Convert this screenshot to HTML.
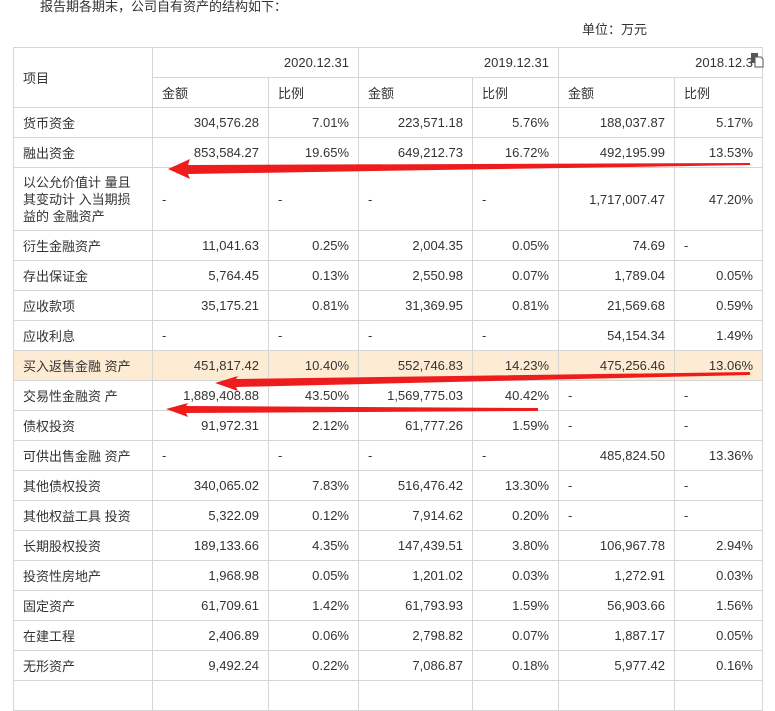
<!DOCTYPE html>
<html><head><meta charset="utf-8"><style>
body{margin:0;width:775px;height:686px;overflow:hidden;background:#fff;font-family:"Liberation Sans","Noto Sans CJK SC",sans-serif;font-size:13px;color:#333;position:relative}
table{position:absolute;left:13px;top:47px;border-collapse:collapse;table-layout:fixed}
td{border:1px solid #d5d5d5;padding:0 9px;height:29px;white-space:nowrap;overflow:hidden}
td.r{text-align:right}
tr.hl td{background:#fdebd3}
.t{position:absolute;font-size:13px;color:#333}
</style></head><body>
<div class="t" style="left:40px;top:-4px">报告期各期末，公司自有资产的结构如下：</div>
<div class="t" style="left:582px;top:19px">单位：万元</div>
<table>
<colgroup><col style="width:139px"><col style="width:116px"><col style="width:90px"><col style="width:114px"><col style="width:86px"><col style="width:116px"><col style="width:88px"></colgroup>
<tr><td rowspan="2" style="vertical-align:middle">项目</td><td class="r" colspan="2">2020.12.31</td><td class="r" colspan="2">2019.12.31</td><td class="r" colspan="2" style="padding-right:9px">2018.12.3</td></tr>
<tr><td>金额</td><td>比例</td><td>金额</td><td>比例</td><td>金额</td><td>比例</td></tr>
<tr><td>货币资金</td><td class="r">304,576.28</td><td class="r">7.01%</td><td class="r">223,571.18</td><td class="r">5.76%</td><td class="r">188,037.87</td><td class="r">5.17%</td></tr>
<tr><td>融出资金</td><td class="r">853,584.27</td><td class="r">19.65%</td><td class="r">649,212.73</td><td class="r">16.72%</td><td class="r">492,195.99</td><td class="r">13.53%</td></tr>
<tr style="height:62px"><td style="height:62px;line-height:17px;white-space:normal;padding-top:0;padding-bottom:0">以公允价值计 量且其变动计 入当期损益的 金融资产</td><td>-</td><td>-</td><td>-</td><td>-</td><td class="r">1,717,007.47</td><td class="r">47.20%</td></tr>
<tr><td>衍生金融资产</td><td class="r">11,041.63</td><td class="r">0.25%</td><td class="r">2,004.35</td><td class="r">0.05%</td><td class="r">74.69</td><td>-</td></tr>
<tr><td>存出保证金</td><td class="r">5,764.45</td><td class="r">0.13%</td><td class="r">2,550.98</td><td class="r">0.07%</td><td class="r">1,789.04</td><td class="r">0.05%</td></tr>
<tr><td>应收款项</td><td class="r">35,175.21</td><td class="r">0.81%</td><td class="r">31,369.95</td><td class="r">0.81%</td><td class="r">21,569.68</td><td class="r">0.59%</td></tr>
<tr><td>应收利息</td><td>-</td><td>-</td><td>-</td><td>-</td><td class="r">54,154.34</td><td class="r">1.49%</td></tr>
<tr class="hl"><td>买入返售金融 资产</td><td class="r">451,817.42</td><td class="r">10.40%</td><td class="r">552,746.83</td><td class="r">14.23%</td><td class="r">475,256.46</td><td class="r">13.06%</td></tr>
<tr><td>交易性金融资 产</td><td class="r">1,889,408.88</td><td class="r">43.50%</td><td class="r">1,569,775.03</td><td class="r">40.42%</td><td>-</td><td>-</td></tr>
<tr><td>债权投资</td><td class="r">91,972.31</td><td class="r">2.12%</td><td class="r">61,777.26</td><td class="r">1.59%</td><td>-</td><td>-</td></tr>
<tr><td>可供出售金融 资产</td><td>-</td><td>-</td><td>-</td><td>-</td><td class="r">485,824.50</td><td class="r">13.36%</td></tr>
<tr><td>其他债权投资</td><td class="r">340,065.02</td><td class="r">7.83%</td><td class="r">516,476.42</td><td class="r">13.30%</td><td>-</td><td>-</td></tr>
<tr><td>其他权益工具 投资</td><td class="r">5,322.09</td><td class="r">0.12%</td><td class="r">7,914.62</td><td class="r">0.20%</td><td>-</td><td>-</td></tr>
<tr><td>长期股权投资</td><td class="r">189,133.66</td><td class="r">4.35%</td><td class="r">147,439.51</td><td class="r">3.80%</td><td class="r">106,967.78</td><td class="r">2.94%</td></tr>
<tr><td>投资性房地产</td><td class="r">1,968.98</td><td class="r">0.05%</td><td class="r">1,201.02</td><td class="r">0.03%</td><td class="r">1,272.91</td><td class="r">0.03%</td></tr>
<tr><td>固定资产</td><td class="r">61,709.61</td><td class="r">1.42%</td><td class="r">61,793.93</td><td class="r">1.59%</td><td class="r">56,903.66</td><td class="r">1.56%</td></tr>
<tr><td>在建工程</td><td class="r">2,406.89</td><td class="r">0.06%</td><td class="r">2,798.82</td><td class="r">0.07%</td><td class="r">1,887.17</td><td class="r">0.05%</td></tr>
<tr><td>无形资产</td><td class="r">9,492.24</td><td class="r">0.22%</td><td class="r">7,086.87</td><td class="r">0.18%</td><td class="r">5,977.42</td><td class="r">0.16%</td></tr>
<tr><td></td><td></td><td></td><td></td><td></td><td></td><td></td></tr>
</table>
<svg width="775" height="686" style="position:absolute;left:0;top:0">
<g fill="#555"><rect x="751" y="53" width="7" height="10"/></g>
<path d="M755 57 h6 l2 2 v8 h-8 z" fill="#fff" stroke="#555" stroke-width="1"/>
<g fill="#ee1c1c">
<polygon points="168,169 190,159 188,165 750,163 750,165 188,174 190,179"/>
<polygon points="215,383 238,376 236,379 750,372 750,375 236,387 238,391"/>
<polygon points="166,409 188,403 186,406 538,408 538,411 186,413 188,417"/>
</g>
</svg>
</body></html>
